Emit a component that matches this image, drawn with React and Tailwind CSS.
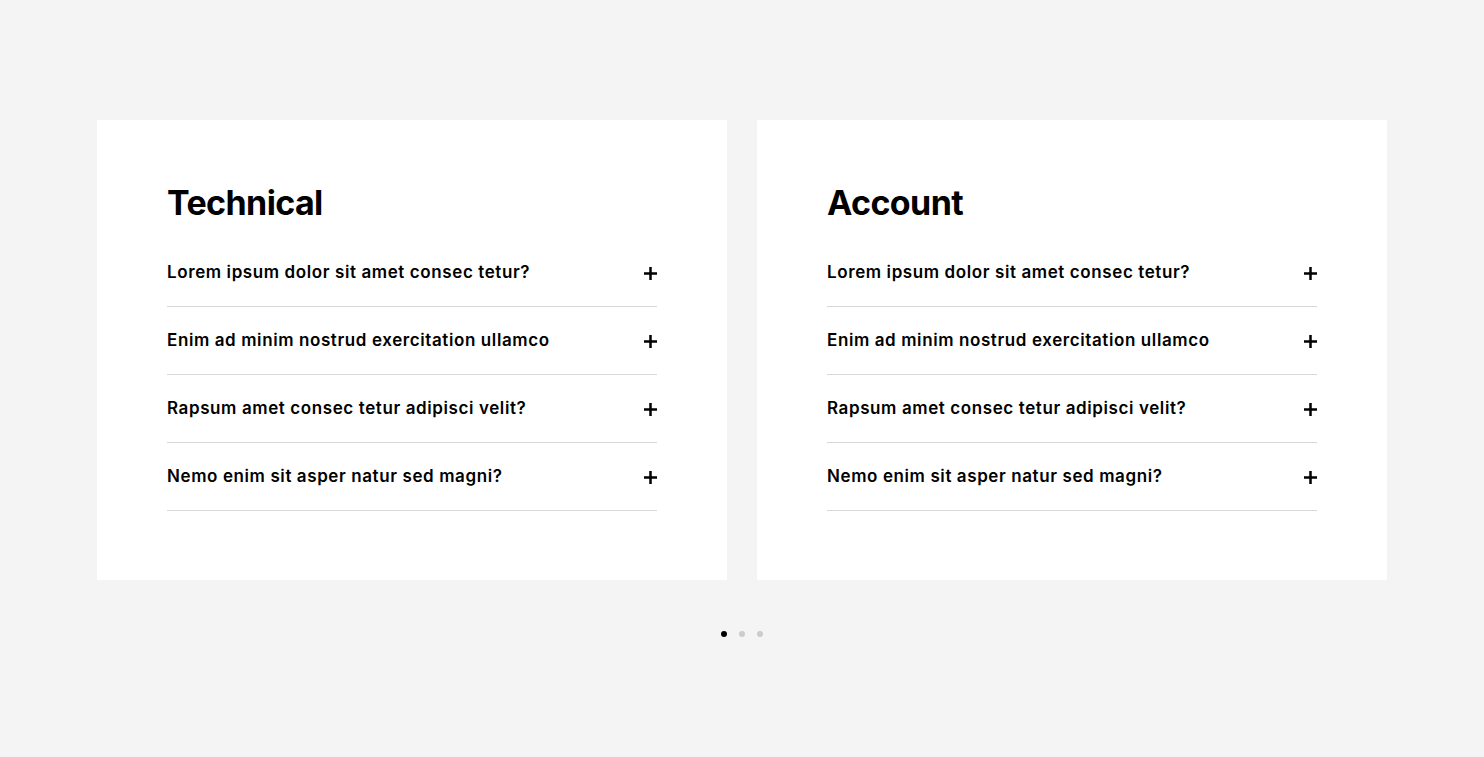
import React from "react";

const questions = [
  "Lorem ipsum dolor sit amet consec tetur?",
  "Enim ad minim nostrud exercitation ullamco",
  "Rapsum amet consec tetur adipisci velit?",
  "Nemo enim sit asper natur sed magni?",
];

const Plus = () => (
  <svg width="13" height="13" viewBox="0 0 13 13" className="shrink-0">
    <rect x="5.25" y="0" width="2.5" height="13" fill="#000" />
    <rect x="0" y="5.25" width="13" height="2.5" fill="#000" />
  </svg>
);

const FaqCard = ({ title }) => (
  <div className="w-[630px] h-[460px] bg-white px-[70px] pt-[62px]">
    <h2 className="text-[34px] leading-[41px] font-bold tracking-[-0.6px] text-black">
      {title}
    </h2>
    <div className="mt-[16px]">
      {questions.map((q) => (
        <div
          key={q}
          className="h-[68px] flex items-center justify-between border-b border-[#d9d9d9] pt-[1px]"
        >
          <span className="text-[17px] font-semibold text-black tracking-[0.6px]">
            {q}
          </span>
          <Plus />
        </div>
      ))}
    </div>
  </div>
);

export default function App() {
  return (
    <div
      className="min-h-[757px] bg-[#f4f4f4] pt-[120px]"
      style={{ fontFamily: "Inter, 'Noto Sans', sans-serif" }}
    >
      <div className="flex justify-center gap-[30px]">
        <FaqCard title="Technical" />
        <FaqCard title="Account" />
      </div>
      <div className="flex justify-center gap-[12px] mt-[51px]">
        <span className="w-[6px] h-[6px] rounded-full bg-black" />
        <span className="w-[6px] h-[6px] rounded-full bg-[#cccccc]" />
        <span className="w-[6px] h-[6px] rounded-full bg-[#cccccc]" />
      </div>
    </div>
  );
}
